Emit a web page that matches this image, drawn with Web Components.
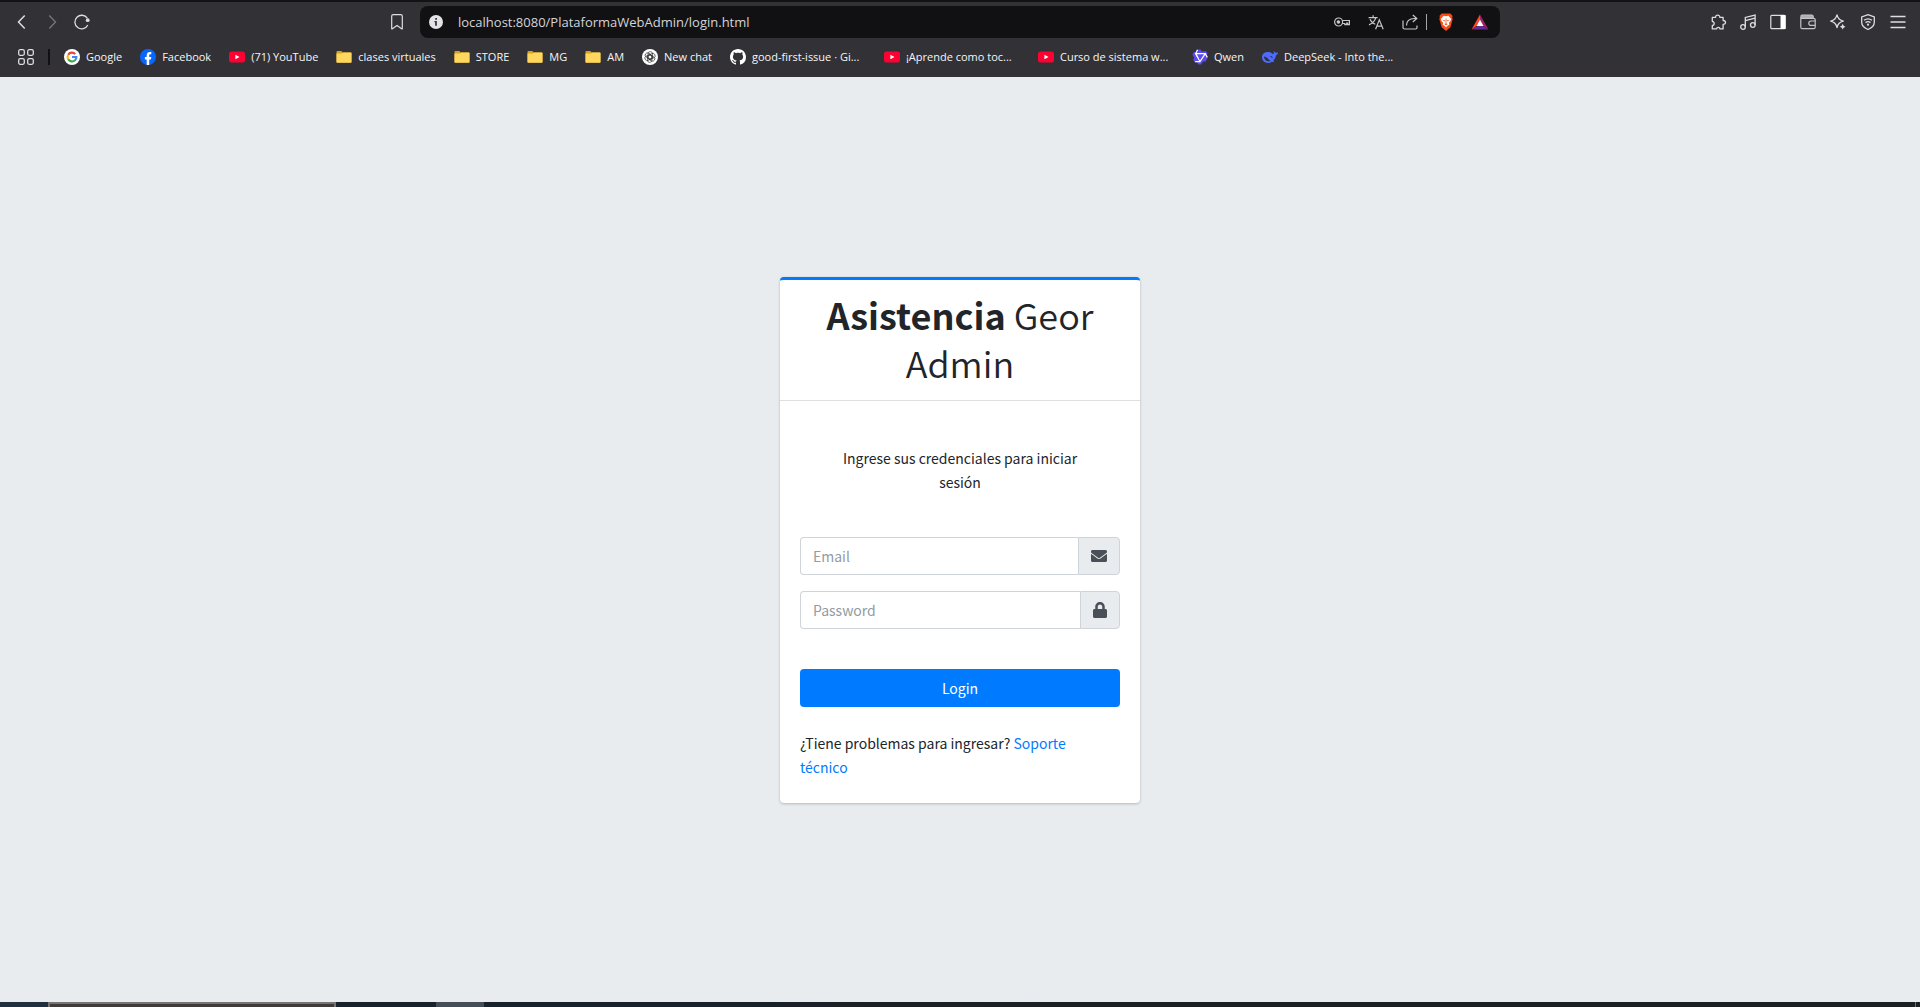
<!DOCTYPE html>
<html lang="es">
<head>
<meta charset="utf-8">
<title>Asistencia Geor Admin</title>
<style>
  html, body { margin: 0; height: 100%; }
  body { background: #e9ecef; font-family: "Open Sans", "Liberation Sans", sans-serif; }
</style>
</head>
<body>
<app-window></app-window>

<script>
const ICONS = {
  back: '<path d="M10.700 1.500L4.500 8l6.200 6.500" fill="none" stroke="currentColor" stroke-width="1.500"/>',
  forward: '<path d="M5.300 1.500L11.500 8l-6.200 6.500" fill="none" stroke="currentColor" stroke-width="1.300"/>',
  reload: '<path d="M13.800 11A6.800 6.800 0 1 1 13.300 4.200" fill="none" stroke="currentColor" stroke-width="1.300"/><circle cx="13.700" cy="6.200" r="1.900" fill="currentColor"/>',
  bookmark: '<path d="M2.700 2.200Q2.700 .7 4.200.7h7.600q1.500 0 1.500 1.500v12.300q0 .8-.7.300L8 11.600l-4.600 3.200q-.7.500-.7-.3z" fill="none" stroke="currentColor" stroke-width="1.200"/>',
  info: '<circle cx="8" cy="8" r="7" fill="#e3e3e8"/><path d="M7.200 4h1.800v1.700H7.200zM6.400 7h2.500v4.700H7.100V8.200h-.7z" fill="#3a393e"/>',
  key: '<g fill="none" stroke="currentColor" stroke-width="1.200"><path d="M8.400 6.500h7v4.200h-1.700V9h-1v1.700h-1.900V9.500H8.400"/><circle cx="4.600" cy="8" r="4"/><circle cx="4.400" cy="8" r="1.200" fill="currentColor"/></g>',
  translate: '<g fill="none" stroke="currentColor" stroke-width="1.200"><path d="M.6 3.600h9M5.100 1.300v2.300M2 5.200c1 2.200 3.500 4.400 5.300 5M7.800 3.700C7.200 6.500 4 9.500 1 10.900"/><path d="M7.600 15.300l3.700-9.500 3.900 9.500M8.900 12.200h5"/></g>',
  share: '<g fill="none" stroke="currentColor" stroke-width="1.200"><path d="M1 6.500v7q0 1.500 1.500 1.500h11q1.500 0 1.500-1.500v-2"/><path d="M4.500 11.500c0-4.500 2.500-7 8-7h2M10.800 1l4 3.500-4 3.500"/></g>',
  brave: '<path d="M3.600-.6h8.800l2.200 2.500-.5 1.400.6 1.600-2.100 7.500q-.4 1-1.200 1.500L8 16.900l-3.400-3q-.8-.5-1.200-1.500L1.300 4.900l.6-1.600-.5-1.400z" fill="#fb4a10"/><path d="M8 2.300l2.400-.5 2.800 3.300-.8 2.200-1.600 1.800.6 1.500L8.800 12.400 8 13.500l-.8-1.100-2.600-1.800.6-1.500L3.600 7.300l-.8-2.200 2.800-3.300z" fill="#fff"/><path d="M4.500 5.700l2.400.6-.3 1.300zM11.500 5.700l-2.400.6.3 1.300zM7.600 4.500h.8v4.500h-.8zM6.200 10L8 9.300l1.800.7L8 11.300z" fill="#fb4a10"/>',
  bat: '<path d="M8 .5L16.500 15.500 11 12 8 5.500z" fill="#9e1f63"/><path d="M-.5 15.500h17L11 12H5z" fill="#662d91"/><path d="M8 .5v5L4.500 12 -.5 15.500z" fill="#ff4724"/><path d="M8 5.500L4.500 12h7z" fill="#fff"/>',
  puzzle: '<path d="M2 3.200h3.300C5 .2 9.700.2 9.500 3.200h3.300v3.200c3.200 0 3.200 3.800 0 3.800v4.600H9.600c.1-2-3.300-2-3.200 0H2v-3.500c2.500 0 2.500-3.900 0-3.900z" fill="none" stroke="currentColor" stroke-width="1.300" stroke-linejoin="round" transform="translate(.3 .1)"/>',
  music: '<g fill="none" stroke="currentColor" stroke-width="1.300"><circle cx="3" cy="13" r="2.300"/><circle cx="12.800" cy="11" r="2.300"/><path d="M5.300 13V3.400L15.100 1v10M5.300 6.600l9.800-2.400"/></g>',
  panel: '<rect x=".8" y="1.300" width="14.400" height="13.400" rx="1" fill="none" stroke="currentColor" stroke-width="1.200"/><path d="M10.500 1h5v14h-5z" fill="#fff"/>',
  wallet: '<path d="M.8 2.500Q.8 1 2.300 1h9.500q1.500 0 1.500 1.500v1.700H1z" fill="#aeadb1"/><g fill="none" stroke="#c4c3c7" stroke-width="1.200"><path d="M.8 2.700v10.500q0 1.500 1.500 1.500h11.400q1.500 0 1.500-1.500V5.700q0-1.400-1.500-1.400H.8M13.200 4V2.500Q13.200 1 11.700 1H2.300Q.8 1 .8 2.600"/><path d="M15.200 7H11q-2.200 0-2.200 2.200t2.200 2.200h4.200"/></g>',
  sparkle: '<path d="M7 .8q1.200 5 6.300 6.300Q8.200 8.300 7 13.500 5.800 8.300.7 7.100 5.800 5.800 7 .8z" fill="none" stroke="currentColor" stroke-width="1.300" stroke-linejoin="round"/><path d="M12.700 9.800q.5 2.300 2.800 2.900-2.300.5-2.800 2.900-.5-2.400-2.900-2.900 2.400-.6 2.900-2.900z" fill="currentColor"/>',
  shield: '<g fill="none" stroke="currentColor" stroke-width="1.300"><path d="M8 .7l6.300 2.200v5.300q0 4.600-6.300 7.300-6.300-2.700-6.300-7.300V2.900z"/><path d="M4 6.300q4-2.800 8 0M5.500 8.600q2.500-1.800 5 0"/></g><circle cx="8" cy="10.700" r="1.100" fill="currentColor"/>',
  menu: '<path d="M.5 2.500h15M.5 8h15M.5 13.500h15" stroke="currentColor" stroke-width="1.300"/>',
  apps: '<g fill="none" stroke="currentColor" stroke-width="1.300"><rect x=".7" y=".7" width="5.600" height="5.600" rx="1.500"/><rect x="9.700" y=".7" width="5.600" height="5.600" rx="1.500"/><rect x=".7" y="9.700" width="5.600" height="5.600" rx="1.500"/><rect x="9.700" y="9.700" width="5.600" height="5.600" rx="1.500"/></g>',
  google: '<circle cx="8" cy="8" r="8" fill="#fff"/><g fill="none" stroke-width="2.100"><path d="M4.200 5.800A4.400 4.400 0 0 1 11.200 5" stroke="#ea4335"/><path d="M4.200 10.200a4.400 4.400 0 0 1 0-4.400" stroke="#fbbc05"/><path d="M11 11.300a4.400 4.400 0 0 1-6.800-1.100" stroke="#34a853"/><path d="M8 8h4.400a4.400 4.400 0 0 1-1.500 3.400" stroke="#4285f4"/></g>',
  facebook: '<circle cx="8" cy="8" r="8" fill="#0866ff"/><path d="M6.700 16v-5.500H4.900V8h1.800V6.600c0-2.700 1.300-3.700 3.200-3.700.6 0 1 .1 1.400.2v2.200h-.9c-.9 0-1.200.4-1.200 1.300V8h2.100l-.4 2.500H9.200V16z" fill="#fff"/>',
  youtube: '<rect y="2.500" width="16" height="11" rx="2.500" fill="#ff0033"/><path d="M6.400 5.700v4.600L10.500 8z" fill="#fff"/>',
  folder: '<path d="M.5 2.800q0-.8.8-.8h4l1.500 1.500h8q.7 0 .7.700V13.500H.5z" fill="#d9a21c"/><path d="M.5 4.500h5.300l1.200-1h7.800q.7 0 .7.700v8.700q0 .8-.8.800H1.300q-.8 0-.8-.8z" fill="#ffd75e"/>',
  chat: '<circle cx="8" cy="8" r="8" fill="#fff"/><g fill="none" stroke="#333" stroke-width=".7"><rect x="6" y="2.600" width="4.600" height="7.600" rx="2.300"/><rect x="6" y="2.600" width="4.600" height="7.600" rx="2.300" transform="rotate(60 8 8)"/><rect x="6" y="2.600" width="4.600" height="7.600" rx="2.300" transform="rotate(120 8 8)"/><rect x="6" y="2.600" width="4.600" height="7.600" rx="2.300" transform="rotate(180 8 8)"/><rect x="6" y="2.600" width="4.600" height="7.600" rx="2.300" transform="rotate(240 8 8)"/><rect x="6" y="2.600" width="4.600" height="7.600" rx="2.300" transform="rotate(300 8 8)"/></g>',
  github: '<path fill="#fff" d="M8 0C3.580 0 0 3.580 0 8c0 3.540 2.290 6.530 5.470 7.590.4.070.55-.17.55-.38 0-.19-.01-.82-.01-1.490-2.010.37-2.530-.49-2.690-.94-.09-.23-.48-.94-.82-1.130-.28-.15-.68-.52-.01-.53.63-.01 1.080.58 1.230.82.72 1.210 1.870.87 2.330.66.070-.52.280-.87.51-1.070-1.780-.2-3.640-.89-3.640-3.950 0-.87.310-1.590.82-2.150-.08-.2-.36-1.020.08-2.120 0 0 .67-.21 2.200.82.640-.18 1.320-.27 2-.27s1.360.09 2 .27c1.530-1.040 2.200-.82 2.200-.82.440 1.100.160 1.920.080 2.120.510.560.820 1.270.820 2.150 0 3.070-1.870 3.750-3.650 3.950.290.250.540.730.540 1.480 0 1.070-.01 1.930-.01 2.200 0 .21.150.46.550.38A8.010 8.010 0 0 0 16 8c0-4.420-3.580-8-8-8z"/>',
  qwen: '<path d="M5.500.5h3l1 1.800h4.700l1.400 2.500-1 1.900 1.100 2-2.200 3.900h-2.300L9 15.500H6.200L5 13.300H2.600l-1.400-2.600 1-1.800L.4 5.600l1.400-2.500h2.300z" fill="#5b4be8"/><g fill="none" stroke="#fff" stroke-width="1.200"><path d="M3.700 4.700h9.600L8 12.700z"/><path d="M5.500.8L3.700 4.700 6 8.800M13.300 4.700l2 3.700M8 12.700H3.200"/></g>',
  deepseek: '<path d="M15.900 3.300c-.2-.1-.9.300-1.300.4-.7.200-1.300 0-1.800-.6-.4-.5-.5-.9-1.300-1.100.3.800.2 1.700.9 2.600-.6 0-1 .1-1.600.4C9.300 3.700 7.600 2.900 5.300 3 1.900 3.100 0 5.600 0 8.300c0 3.300 2.400 5.700 5.900 5.700 1.600 0 2.900-.5 4-1.300.8.400 1.700.4 2.100.1l-.7-1.200c1.700-1.500 2.500-3.400 2.700-5.300 1.300-.3 2-1.300 1.900-3z" fill="#4d6bfe"/><path d="M2 7.500c3.500.2 4.500 3.600 6.600 4.600-3 1-6.500-.9-6.600-4.600zM7.600 7.300c1.500-.6 2.900.3 3.100 2-1-.2-1.200-1.500-3.100-2z" fill="#303035"/>',
};

/* Vector icon, drawn on a 16 unit grid */
class UiIcon extends HTMLElement {
  connectedCallback() {
    const root = this.attachShadow({ mode: 'open' });
    root.innerHTML = `<style>
      :host { display: block; flex: none; width: 16px; height: 16px; }
      svg { display: block; width: 100%; height: 100%; overflow: visible; }
    </style><svg viewBox="0 0 16 16" aria-hidden="true">${ICONS[this.getAttribute('name')]}</svg>`;
  }
}

class ToolButton extends HTMLElement {
  connectedCallback() {
    const root = this.attachShadow({ mode: 'open' });
    root.innerHTML = `<style>
      :host { display: block; flex: none; color: #dedde2; }
      :host([dim]) { color: #77767b; }
      button { display: block; margin: 0; padding: 0; border: 0; background: none; color: inherit; }
    </style><button type="button" aria-label="${this.getAttribute('label')}"><ui-icon name="${this.getAttribute('icon')}"></ui-icon></button>`;
  }
}

class AddressBar extends HTMLElement {
  connectedCallback() {
    const root = this.attachShadow({ mode: 'open' });
    root.innerHTML = `<style>
      :host { display: flex; align-items: center; gap: 11px; box-sizing: border-box; height: 32px;
        padding: 0 12px 0 8px; border-radius: 8px; background: #111113; }
      input { flex: 1; min-width: 0; margin: 0; padding: 0; border: 0; outline: 0; background: none;
        color: #d4d4d9; font: 13px/20px "Open Sans", "Liberation Sans", sans-serif; }
      tool-button { color: #c6c6cb; }
      .start { display: flex; flex: 1; align-items: center; gap: 14px; }
      .group { display: flex; align-items: center; gap: 18px; }
      .mid { gap: 8px; }
      hr { width: 1px; height: 16px; margin: 0; border: 0; background: #a5a5aa; }
    </style>
    <div class="start">
      <tool-button icon="info" label="Información del sitio"></tool-button>
      <input type="text" aria-label="Dirección" value="localhost:8080/PlataformaWebAdmin/login.html" spellcheck="false">
    </div>
    <div class="group">
      <tool-button icon="key" label="Contraseñas"></tool-button>
      <tool-button icon="translate" label="Traducir"></tool-button>
      <div class="group mid">
        <tool-button icon="share" label="Compartir"></tool-button>
        <hr>
      </div>
    </div>
    <div class="group">
      <tool-button icon="brave" label="Shields"></tool-button>
      <tool-button icon="bat" label="Rewards"></tool-button>
    </div>`;
  }
}

class BookmarkLink extends HTMLElement {
  connectedCallback() {
    const root = this.attachShadow({ mode: 'open' });
    root.innerHTML = `<style>
      :host { display: block; flex: none; }
      :host([long]) { width: 136px; }
      a { display: flex; align-items: center; gap: 6px; color: #f6f6f8; text-decoration: none;
        white-space: nowrap; font: 11px/16px "Open Sans", "Liberation Sans", sans-serif; }
    </style><a href="#"><ui-icon name="${this.getAttribute('icon')}"></ui-icon><span><slot></slot></span></a>`;
  }
}

class BrowserChrome extends HTMLElement {
  connectedCallback() {
    const root = this.attachShadow({ mode: 'open' });
    root.innerHTML = `<style>
      :host { display: block; flex: none; background: #323136; border-top: 2px solid #131315; }
      .bar { display: flex; align-items: center; padding: 4px 14px 0; }
      .side { flex: 1; display: flex; align-items: center; gap: 14px; }
      .left > :last-child { margin: 0 15px 0 auto; }
      .right { justify-content: flex-end; }
      address-bar { flex: 0 1 1080px; }
      nav { display: flex; align-items: center; gap: 18px; box-sizing: border-box; height: 39px; padding: 0 0 1px 18px; }
      .apps { display: flex; align-items: center; gap: 14px; margin-right: -4px; }
      .apps hr { width: 2px; height: 16px; margin: 0; border: 0; background: #111113; }
    </style>
    <div class="bar">
      <div class="side left">
        <tool-button icon="back" label="Atrás"></tool-button>
        <tool-button icon="forward" label="Adelante" dim></tool-button>
        <tool-button icon="reload" label="Recargar"></tool-button>
        <tool-button icon="bookmark" label="Añadir marcador"></tool-button>
      </div>
      <address-bar></address-bar>
      <div class="side right">
        <tool-button icon="puzzle" label="Extensiones"></tool-button>
        <tool-button icon="music" label="Multimedia"></tool-button>
        <tool-button icon="panel" label="Panel lateral"></tool-button>
        <tool-button icon="wallet" label="Cartera"></tool-button>
        <tool-button icon="sparkle" label="Asistente"></tool-button>
        <tool-button icon="shield" label="VPN"></tool-button>
        <tool-button icon="menu" label="Menú"></tool-button>
      </div>
    </div>
    <nav aria-label="Marcadores">
      <div class="apps"><tool-button icon="apps" label="Aplicaciones"></tool-button><hr></div>
      <bookmark-link icon="google">Google</bookmark-link>
      <bookmark-link icon="facebook">Facebook</bookmark-link>
      <bookmark-link icon="youtube">(71) YouTube</bookmark-link>
      <bookmark-link icon="folder">clases virtuales</bookmark-link>
      <bookmark-link icon="folder">STORE</bookmark-link>
      <bookmark-link icon="folder">MG</bookmark-link>
      <bookmark-link icon="folder">AM</bookmark-link>
      <bookmark-link icon="chat">New chat</bookmark-link>
      <bookmark-link icon="github" long>good-first-issue · Gi...</bookmark-link>
      <bookmark-link icon="youtube" long>¡Aprende como toc...</bookmark-link>
      <bookmark-link icon="youtube" long>Curso de sistema w...</bookmark-link>
      <bookmark-link icon="qwen">Qwen</bookmark-link>
      <bookmark-link icon="deepseek" long>DeepSeek - Into the...</bookmark-link>
    </nav>`;
  }
}

/* Text box with an icon add-on at its right edge */
class FieldGroup extends HTMLElement {
  connectedCallback() {
    const root = this.attachShadow({ mode: 'open' });
    const label = this.getAttribute('label');
    root.innerHTML = `<style>
      :host { display: flex; height: 38px; }
      input { flex: 1; min-width: 0; box-sizing: border-box; margin: 0; padding: 6px 12px; outline: 0;
        border: 1px solid #ced4da; border-right: 0; border-radius: 4px 0 0 4px; background: #fff;
        color: #495057; font: inherit; }
      input::placeholder { color: #939ba2; opacity: 1; }
      label { display: flex; align-items: center; padding: 0 12px; color: #495057; background: #e9ecef;
        border: 1px solid #ced4da; border-radius: 0 4px 4px 0; }
      ::slotted(svg) { display: block; height: 16px; }
    </style>
    <input id="field" type="${this.getAttribute('type')}" placeholder="${label}">
    <label for="field" aria-label="${label}"><slot></slot></label>`;
  }
}

class LoginCard extends HTMLElement {
  connectedCallback() {
    const root = this.attachShadow({ mode: 'open' });
    root.innerHTML = `<style>
      :host { display: block; box-sizing: border-box; width: 360px; max-width: 100%; background: #fff;
        border-top: 3px solid #007bff; border-radius: 4px; color: #212529;
        box-shadow: 0 0 1px rgba(0,0,0,.125), 0 1px 3px rgba(0,0,0,.2);
        font: 14px/24px "Noto Sans CJK JP", "Noto Sans", sans-serif; }
      header { padding: 10px 20px 14px; border-bottom: 1px solid #dfdfdf; text-align: center; }
      h1 { margin: 0; font-size: 36px; line-height: 48px; font-weight: 350; }
      b { font-weight: 700; }
      form { display: flex; flex-direction: column; gap: 16px; padding: 45px 20px 24px; }
      p { margin: 0; }
      .msg { padding: 0 32px 27px; text-align: center; }
      .help { padding-right: 32px; }
      button { height: 38px; margin: 24px 0 8px; padding: 0 12px; border: 0; border-radius: 4px;
        background: #007bff; color: #fff; font: inherit; }
      a { color: #007bff; text-decoration: none; }
    </style>
    <header><h1><b>Asistencia</b> Geor Admin</h1></header>
    <form>
      <p class="msg">Ingrese sus credenciales para iniciar sesión</p>
      <field-group type="email" label="Email"><svg viewBox="0 0 512 512" aria-hidden="true"><path fill="currentColor" d="M502.300 190.800c3.900-3.100 9.700-.2 9.700 4.700V400c0 26.500-21.500 48-48 48H48c-26.500 0-48-21.500-48-48V195.600c0-5 5.700-7.800 9.700-4.700 22.400 17.400 52.100 39.500 154.100 113.600 21.100 15.400 56.700 47.800 92.200 47.600 35.700.3 72-32.800 92.300-47.600 102-74.100 131.600-96.300 154-113.700zM256 320c23.200.4 56.600-29.200 73.400-41.400 132.700-96.300 142.800-104.700 173.400-128.700 5.800-4.500 9.200-11.500 9.200-18.900v-19c0-26.500-21.500-48-48-48H48c-26.500 0-48 21.500-48 48v19c0 7.400 3.400 14.300 9.200 18.900 30.600 23.900 40.700 32.400 173.400 128.700 16.800 12.200 50.200 41.800 73.400 41.400z"/></svg></field-group>
      <field-group type="password" label="Password"><svg viewBox="0 0 448 512" aria-hidden="true"><path fill="currentColor" d="M400 224h-24v-72C376 68.200 307.800 0 224 0S72 68.200 72 152v72H48c-26.500 0-48 21.500-48 48v192c0 26.500 21.500 48 48 48h352c26.500 0 48-21.500 48-48V272c0-26.500-21.500-48-48-48zm-104 0H152v-72c0-39.700 32.300-72 72-72s72 32.300 72 72v72z"/></svg></field-group>
      <button type="button">Login</button>
      <p class="help">¿Tiene problemas para ingresar? <a href="#">Soporte técnico</a></p>
    </form>`;
  }
}

/* Visible top edge of the desktop task bar */
class TaskBar extends HTMLElement {
  connectedCallback() {
    const root = this.attachShadow({ mode: 'open' });
    root.innerHTML = `<style>
      :host { display: flex; flex: none; height: 5px; background: linear-gradient(90deg, #17222d 25%, #1b2023 55%); }
      .start { width: 48px; background: #1f2f3e; }
      .search { box-sizing: border-box; width: 288px; background: #3f3b3b; border: 2px solid #787474; border-bottom: 0; }
      .app { width: 48px; margin-left: 100px; background: #454e56; }
      .peek { width: 4px; margin-left: auto; border-left: 1px solid #6d7173; }
    </style><div class="start"></div><div class="search"></div><div class="app"></div><div class="peek"></div>`;
  }
}

class AppWindow extends HTMLElement {
  connectedCallback() {
    const root = this.attachShadow({ mode: 'open' });
    root.innerHTML = `<style>
      :host { display: flex; flex-direction: column; min-height: 100vh; }
      main { flex: 1; display: flex; align-items: center; justify-content: center; }
    </style>
    <browser-chrome></browser-chrome>
    <main><login-card></login-card></main>
    <task-bar></task-bar>`;
  }
}

customElements.define('ui-icon', UiIcon);
customElements.define('tool-button', ToolButton);
customElements.define('address-bar', AddressBar);
customElements.define('bookmark-link', BookmarkLink);
customElements.define('browser-chrome', BrowserChrome);
customElements.define('field-group', FieldGroup);
customElements.define('login-card', LoginCard);
customElements.define('task-bar', TaskBar);
customElements.define('app-window', AppWindow);
</script>
</body>
</html>
